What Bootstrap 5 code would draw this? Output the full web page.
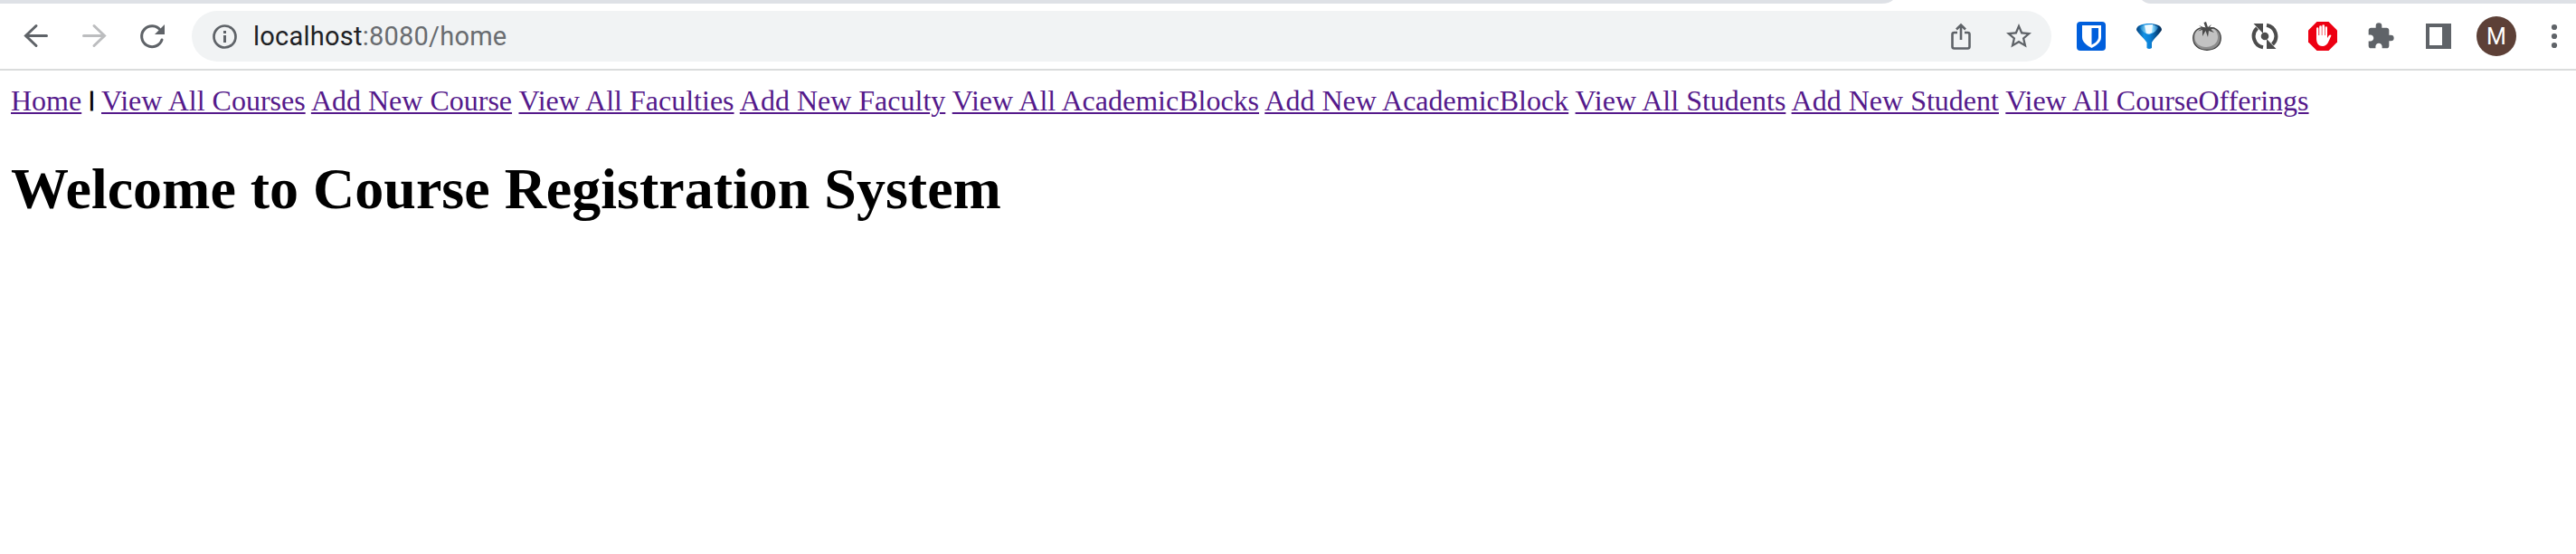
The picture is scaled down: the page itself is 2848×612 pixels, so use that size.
<!DOCTYPE html>
<html lang="en">
<head>
<meta charset="utf-8">
<meta name="viewport" content="width=device-width, initial-scale=1">
<title>Course Registration System</title>
<link href="https://cdn.jsdelivr.net/npm/bootstrap@5.3.0/dist/css/bootstrap.min.css" rel="stylesheet">
<style>
body{font-family:"Liberation Serif",serif;color:#000;background:#fff}
svg{display:block;flex:none}
.tabstrip{height:4px;background:#dee1e6}
.tab-left{width:2080px;height:4px}
.tab-active{width:300px;height:4px}
.toolbar{height:74px;border-bottom:2px solid #dadcdc;padding-left:24px;padding-right:8px;color:#5f6368;font-family:Roboto,sans-serif}
.nav-icons{gap:32px;width:188px}
.omnibox{height:56px;width:2056px;background:#f1f3f4;padding:0 20px}
.address{font-size:29px;line-height:56px;color:#696c70;margin-left:16px;letter-spacing:.23px}
.address b{font-weight:400;color:#202124}
.tools{gap:32px;margin-left:28px}
.dim{color:#bcbdbf}
.avatar{width:44px;height:44px;margin:0 -6px;background:#5d4037;color:#fff;font-size:25px;padding-top:2px}
.site-links{font-size:32px;line-height:36px;padding:15px 12px 0}
.site-links a{color:#551a8b;text-decoration:underline;text-decoration-thickness:2px;text-underline-offset:2px}
.bar{display:inline-block;width:6.4px;font-size:24px;line-height:24px;font-weight:700;vertical-align:5px;text-indent:.6px;-webkit-text-stroke:1.2px #000}
h1.welcome{font-size:64px;font-weight:700;line-height:74px;margin:43px 12px 0}
</style>
<script src="https://cdn.jsdelivr.net/npm/bootstrap@5.3.0/dist/js/bootstrap.bundle.min.js"></script>
</head>
<body>
<header>
<div class="tabstrip d-flex"><div class="tab-left"></div><svg class="tab-active" viewBox="0 0 300 4"><path fill="#fff" d="M0 4C6 4 10 2.500 13 0H288C291 2.500 294 4 298 4Z"/></svg></div>
<div class="toolbar d-flex align-items-center">
<div class="nav-icons d-flex">
<svg width="32" height="32" viewBox="0 0 32 32" fill="none" stroke="currentColor" stroke-width="3" stroke-linecap="round"><path d="M27.500 15.500H5M16 4.500 4.500 15.500 16 26.500"/></svg>
<svg class="dim" width="32" height="32" viewBox="0 0 32 32" fill="none" stroke="currentColor" stroke-width="3" stroke-linecap="round"><path d="M4.500 15.500H27M16 4.500 27.500 15.500 16 26.500"/></svg>
<svg width="32" height="32" viewBox="0 0 32 32"><path d="M25.500 9.500A11.500 11.500 0 1 0 27 20" fill="none" stroke="currentColor" stroke-width="3" stroke-linecap="round"/><path fill="currentColor" d="M30 3V14H19Z"/></svg>
</div>
<div class="omnibox rounded-pill d-flex align-items-center">
<svg width="32" height="32" viewBox="0 0 32 32"><circle cx="16.500" cy="16.500" r="12" fill="none" stroke="currentColor" stroke-width="2.700"/><path fill="currentColor" d="M15 10h3v3h-3zM15 15h3v8h-3z"/></svg>
<div class="address"><b>localhost</b>:8080/home</div>
<div class="d-flex ms-auto tools">
<svg width="32" height="32" viewBox="0 0 32 32" fill="none" stroke="currentColor" stroke-width="2.600"><path d="M12 12H8.500Q6.500 12 6.500 14V27.500Q6.500 29.500 8.500 29.500H23.500Q25.500 29.500 25.500 27.500V14Q25.500 12 23.500 12H20M16 20V4M11 8.500 16 3.500 21 8.500"/></svg>
<svg width="32" height="32" viewBox="0 0 24 24" fill="currentColor"><path transform="translate(-.6 -.6) scale(1.050)" d="M22 9.240l-7.190-.62L12 2 9.190 8.630 2 9.240l5.460 4.730L5.820 21 12 17.270 18.180 21l-1.630-7.030L22 9.240zM12 15.400l-3.760 2.270 1-4.280-3.320-2.880 4.380-.38L12 6.100l1.710 4.040 4.380.38-3.320 2.880 1 4.280L12 15.400z"/></svg>
</div>
</div>
<div class="tools d-flex align-items-center">
<svg width="32" height="32" viewBox="0 0 32 32"><rect width="32" height="32" rx="4" fill="#005fdc"/><path fill="#fff" d="M6 4H27V17C27 23 21 26.500 16.500 29C12 26.500 6 23 6 17Z"/><path fill="#005fdc" d="M16.500 7H24V17C24 21 20 24 16.500 25.500Z"/></svg>
<svg width="32" height="32" viewBox="0 0 32 32"><defs><linearGradient id="fun"><stop stop-color="#04407c"/><stop offset=".3" stop-color="#1291e4"/><stop offset=".55" stop-color="#0a7fd6"/><stop offset="1" stop-color="#02264e"/></linearGradient><linearGradient id="rim"><stop stop-color="#1180c8"/><stop offset=".35" stop-color="#8ed8fb"/><stop offset=".7" stop-color="#8fdcff"/><stop offset="1" stop-color="#0f6fb8"/></linearGradient></defs><path fill="url(#fun)" d="M2 9C2 4 9 2 16 2S30 4 30 9C29 12 20 20 19 23V29Q16 31 13.500 29V23C12 20 3 12 2 9Z"/><path fill="url(#rim)" d="M6 6Q10 3 16 3T26 6Q25 11 16 14 8 12 6 6Z"/><path fill="#effaff" d="M11 4 20 3 19 12Q16 14 13 13Z"/></svg>
<svg width="32" height="32" viewBox="0 0 32 32"><path fill="#8c8c8c" stroke="#3c3c3c" stroke-width="1.200" d="M16 8C24 4 31.300 10 31.300 18S25 31.300 16 31.300.7 26 .7 18 8 4 16 8Z"/><path fill="#c2c2c2" d="M15 9C23 5 28 10 28 17S22 28 15 28 2.500 24 2.500 17 8 6 15 9Z"/><path fill="#4a4a4a" d="M14.500 7 12.500 1 15 0 17 6 21 3 18.500 7 25 6 20.500 8.500 24 12 18 10 17 17 14.500 10 11 16 11 9 6 10.500 11 7 7 4Z"/></svg>
<svg width="32" height="32" viewBox="0 0 32 32" fill="none" stroke="#4c4c4c" stroke-width="4"><path d="M14 28.300A12.500 12.500 0 0 1 7.500 7M18 3.700A12.500 12.500 0 0 1 24.500 25"/><circle cx="16" cy="16" r="4.300" fill="#4c4c4c" stroke="none"/><path fill="#4c4c4c" stroke="none" d="M3.500 2H14V13ZM28.500 30H18V19Z"/></svg>
<svg width="32" height="32" viewBox="0 0 32 32"><path fill="#ed0012" d="M9.500 0H22.500L32 9.500V22.500L22.500 32H9.500L0 22.500V9.500Z"/><path fill="#fff" d="M9 7.500a1.200 1.200 0 0 1 2.400 0V15h.8V5.500a1.300 1.300 0 0 1 2.600 0V15h.6V4.500a1.300 1.300 0 0 1 2.600 0V15h.6V6.500a1.200 1.200 0 0 1 2.400 0V18l2-3q1-1 2.500 0C22.500 22 21 27 16 27 10 27 9 22 9 18Z"/></svg>
<svg width="32" height="32" viewBox="0 0 24 24" fill="currentColor"><path d="M20.500 11H19V7c0-1.100-.9-2-2-2h-4V3.500a2.500 2.500 0 0 0-5 0V5H4c-1.100 0-1.990.9-1.990 2v3.800H3.500c1.490 0 2.700 1.210 2.700 2.700s-1.210 2.700-2.700 2.700H2V20c0 1.100.9 2 2 2h3.800v-1.500c0-1.490 1.210-2.700 2.700-2.700 1.490 0 2.700 1.210 2.700 2.700V22H17c1.100 0 2-.9 2-2v-4h1.500a2.500 2.500 0 0 0 0-5z"/></svg>
<svg width="32" height="32" viewBox="0 0 32 32"><path fill="currentColor" fill-rule="evenodd" d="M2 2H30V30H2ZM6 6V26H20V6Z"/></svg>
<div class="avatar rounded-circle d-flex align-items-center justify-content-center">M</div>
<svg width="32" height="32" viewBox="0 0 32 32" fill="currentColor"><circle cx="16" cy="6" r="3.100"/><circle cx="16" cy="16" r="3.100"/><circle cx="16" cy="26" r="3.100"/></svg>
</div>
</div>
</header>
<main>
<nav class="site-links text-nowrap"><a href="#">Home</a> <span class="bar">|</span> <a href="#">View All Courses</a> <a href="#">Add New Course</a> <a href="#">View All Faculties</a> <a href="#">Add New Faculty</a> <a href="#">View All AcademicBlocks</a> <a href="#">Add New AcademicBlock</a> <a href="#">View All Students</a> <a href="#">Add New Student</a> <a href="#">View All CourseOfferings</a></nav>
<h1 class="welcome">Welcome to Course Registration System</h1>
</main>
</body>
</html>
